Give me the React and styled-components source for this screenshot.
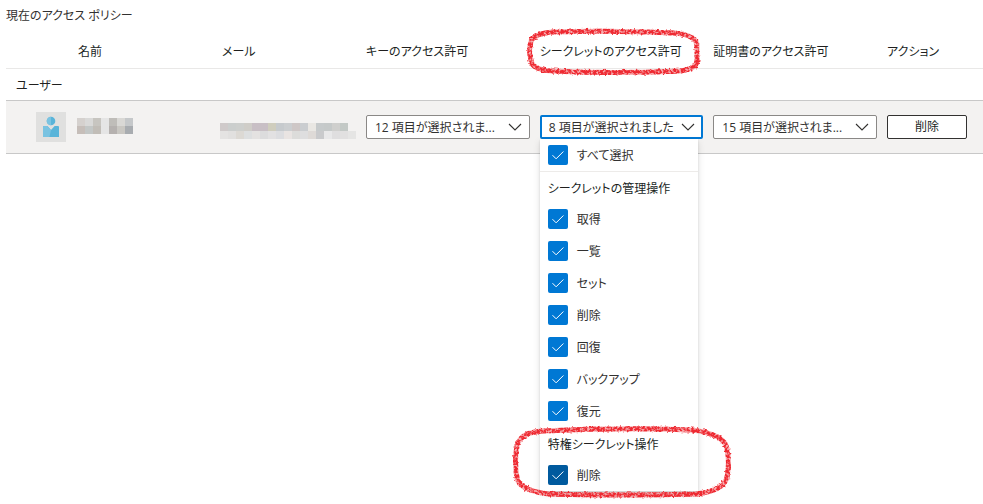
/**
*
* AccessPolicies
*
*/

import React from 'react';
import styled, { createGlobalStyle } from 'styled-components';

const GlobalStyle = createGlobalStyle`
  * {
    box-sizing: border-box;
  }

  body {
    margin: 0;
    background: #fff;
    color: #323130;
    font-family: "Open Sans", "Noto Sans CJK JP", sans-serif;
    font-size: 12px;
    line-height: 18px;
    font-feature-settings: "palt";
  }
`;

const Page = styled.main`
  min-height: 100vh;
  padding: 7px 0 0 6px;
`;

const Title = styled.h1`
  margin: 0 0 9px;
  font-size: 12px;
  font-weight: 400;
`;

const Table = styled.table`
  width: 100%;
  table-layout: fixed;
  border-collapse: separate;
  border-spacing: 0;
`;

const Col = styled.col`
  width: ${props => props.$width || 'auto'};
`;

const HeadCell = styled.th`
  position: relative;
  height: 35px;
  padding: 2px 0 0;
  border-bottom: 1px solid #e9e8e7;
  color: #201f1e;
  font-weight: 400;
  text-align: left;
  white-space: nowrap;
`;

const GroupCell = styled.th`
  height: 32px;
  padding: 2px 10px 0;
  border-bottom: 1px solid #c8c8c8;
  color: #201f1e;
  font-weight: 400;
  text-align: left;
`;

const Cell = styled.td`
  height: 53px;
  padding: 0 10px 0 0;
  border-bottom: 1px solid #c8c8c8;
  background: #f3f2f1;
`;

const Avatar = styled.div`
  display: flex;
  align-items: center;
  justify-content: center;
  width: 30px;
  height: 30px;
  margin-left: 30px;
  background: #e0e0df;
`;

const Mosaic = styled.svg`
  display: block;
  margin: ${props => props.$margin};
`;

const Dropdown = styled.div`
  position: relative;
  display: grid;
  align-items: center;
`;

const Select = styled.select`
  grid-area: 1 / 1;
  width: 100%;
  height: 24px;
  padding: 2px 26px 0 ${props => (props.$open ? '7px' : '8px')};
  border: ${props => (props.$open ? '2px solid #0078d4' : '1px solid #8a8886')};
  border-radius: 2px;
  outline: none;
  background: #fff;
  color: #323130;
  font: inherit;
  font-feature-settings: inherit;
  appearance: none;
`;

const Chevron = styled.svg`
  grid-area: 1 / 1;
  justify-self: end;
  margin-right: 8px;
  pointer-events: none;
`;

const Menu = styled.div`
  position: absolute;
  top: 100%;
  left: 0;
  z-index: 1;
  width: 158px;
  background: #fff;
  box-shadow: 0 3px 7px rgba(0, 0, 0, 0.13), 0 1px 2px rgba(0, 0, 0, 0.11);
`;

const Group = styled.fieldset`
  min-width: 0;
  margin: 0;
  padding: 0;
  border: 0;
`;

const GroupTitle = styled.legend`
  display: flex;
  align-items: center;
  width: 100%;
  height: 32px;
  padding: 2px 8px 0;
  border-top: 1px solid ${props => (props.$divided ? '#edebe9' : 'transparent')};
  color: #201f1e;
  white-space: nowrap;
`;

const Option = styled.label`
  display: flex;
  align-items: center;
  gap: 9px;
  height: 32px;
  padding: 0 8px;
`;

const OptionText = styled.span`
  padding-top: 2px;
`;

const CheckBox = styled.span`
  display: grid;
  width: 20px;
  height: 20px;
`;

const CheckInput = styled.input`
  grid-area: 1 / 1;
  width: 20px;
  height: 20px;
  margin: 0;
  border: 1px solid #605e5c;
  border-radius: 2px;
  appearance: none;

  &:checked {
    border-color: transparent;
    background: ${props => (props.$hovered ? '#005a9e' : '#0078d4')} border-box;
  }
`;

const CheckMark = styled.svg`
  grid-area: 1 / 1;
  place-self: center;
  pointer-events: none;

  input:not(:checked) + & {
    display: none;
  }
`;

const DeleteButton = styled.button`
  display: block;
  width: 80px;
  height: 24px;
  padding: 0;
  border: 1px solid #323130;
  border-radius: 2px;
  background: #fff;
  color: #201f1e;
  font: inherit;
`;

const Marker = styled.svg`
  position: absolute;
  top: ${props => props.$top};
  left: ${props => props.$left};
  z-index: 2;
  pointer-events: none;
`;

const nameTiles = [
  ['#d5d1ce', '#d9d9d8', '#c7c5c0', '#e5e5e5', '#bfbdb9', '#d9d8d5', '#c5c8ca'],
  ['#c6beb9', '#c3c7c6', '#c1bdb7', '#e5e5e5', '#b5b1af', '#c9c7c2', '#a8acb0'],
];

const mailTiles = [
  ['#cfcaca', '#cbcecd', '#cdcfcd', '#cfcdc8', '#c8bfc5', '#c8bfc5', '#cfcdbd', '#c6cacd', '#cbced0', '#cec7c6', '#cacdd0', '#e9e7e3', '#c6cacb', '#c5c9c9', '#cfcfcd', '#c3c9c6'],
  ['#e4e3e2', '#e1e0df', '#dcd9d4', '#dddfe0', '#e4e2e1', '#dcdcdd', '#e2e1e2', '#dcdde0', '#e9e4e2', '#dcdcda', '#dededf', '#dedad7', '#c9cacc', '#e8e8e9', '#dfdedf', '#e1e0e0', '#e5e5e4'],
];

const manageOptions = ['取得', '一覧', 'セット', '削除', '回復', 'バックアップ', '復元'];

const Tiles = ({ rows, label, margin }) => {
  const count = Math.max(...rows.map(row => row.length));
  return (
    <Mosaic $margin={margin} width={count * 8} height={rows.length * 8} shapeRendering="crispEdges" role="img" aria-label={label}>
      {rows.map((row, y) => row.map((fill, x) => (
        <rect key={`${x}-${y}`} x={x * 8} y={y * 8} width="8" height="8" fill={fill} />
      )))}
    </Mosaic>
  );
};

const UserIcon = () => (
  <svg width="18" height="22" viewBox="0 0 18 22" aria-hidden="true">
    <circle cx="9" cy="5" r="4.3" fill="#59b4d9" />
    <path d="M9 .7a4.3 4.3 0 0 0 0 8.6z" fill="#7ac3e1" />
    <path d="M1 11q0-1 1-1h3.4L9 14l3.6-4H16q1 0 1 1v10H1z" fill="#59b4d9" />
    <path d="M1 11q0-1 1-1h3.4L9 14 7.4 21H1z" fill="#7ac3e1" />
  </svg>
);

const Picker = ({ label, value, open, children }) => (
  <Dropdown>
    <Select aria-label={label} $open={open}>
      <option>{value}</option>
    </Select>
    <Chevron width="14" height="8" viewBox="0 0 14 8" aria-hidden="true">
      <path d="M1 1l6 6 6-6" fill="none" stroke="#323130" strokeWidth="1.1" />
    </Chevron>
    {children}
  </Dropdown>
);

const CheckOption = ({ text, hovered }) => (
  <Option>
    <CheckBox>
      <CheckInput type="checkbox" defaultChecked $hovered={hovered} />
      <CheckMark width="14" height="12" viewBox="0 0 14 12" aria-hidden="true">
        <path d="M1.5 6.2l3.6 3.6L12.4 2.5" fill="none" stroke="#fff" strokeWidth="1" />
      </CheckMark>
    </CheckBox>
    <OptionText>{text}</OptionText>
  </Option>
);

// hand drawn red outline, roughened like a crayon
const Crayon = ({ id, top, left, width, height, path }) => (
  <Marker $top={top} $left={left} width={width} height={height} aria-hidden="true">
    <filter id={id} filterUnits="userSpaceOnUse" x="0" y="0" width={width} height={height} colorInterpolationFilters="sRGB">
      <feTurbulence type="fractalNoise" baseFrequency="0.4" numOctaves="2" seed="4" result="noise" />
      <feDisplacementMap in="SourceGraphic" in2="noise" scale="4" xChannelSelector="R" yChannelSelector="G" result="rough" />
      <feColorMatrix in="noise" type="matrix" values="0 0 0 0 0  0 0 0 0 0  0 0 0 0 0  0 0 4 0 -1.2" result="grain" />
      <feComposite in="rough" in2="grain" operator="in" />
    </filter>
    <path d={path} fill="none" stroke="#f25a60" strokeWidth="5" opacity="0.5" />
    <path d={path} fill="none" stroke="#ee2a32" strokeWidth="5" filter={`url(#${id})`} />
  </Marker>
);

class AccessPolicies extends React.PureComponent {
  render() {
    return (
      <Page>
        <GlobalStyle />
        <Title>現在のアクセス ポリシー</Title>
        <Table>
          <colgroup>
            <Col $width="72px" />
            <Col $width="144px" />
            <Col $width="144px" />
            <Col />
            <Col />
            <Col />
            <Col $width="96px" />
          </colgroup>
          <thead>
            <tr>
              <HeadCell as="td" />
              <HeadCell>名前</HeadCell>
              <HeadCell>メール</HeadCell>
              <HeadCell>キーのアクセス許可</HeadCell>
              <HeadCell>
                シークレットのアクセス許可
                <Crayon
                  id="crayon-header"
                  top="-8px"
                  left="-16px"
                  width="180"
                  height="54"
                  path="M28 6Q90 4 150 7Q173 9 173 20V34Q173 43 156 45Q90 48 28 45Q8 44 7 34Q4 24 7 16Q9 8 28 6"
                />
              </HeadCell>
              <HeadCell>証明書のアクセス許可</HeadCell>
              <HeadCell>アクション</HeadCell>
            </tr>
          </thead>
          <tbody>
            <tr>
              <GroupCell colSpan={7}>ユーザー</GroupCell>
            </tr>
            <tr>
              <Cell>
                <Avatar>
                  <UserIcon />
                </Avatar>
              </Cell>
              <Cell>
                <Tiles rows={nameTiles} label="名前" margin="0 0 2px -1px" />
              </Cell>
              <Cell>
                <Tiles rows={mailTiles} label="メール" margin="8px 0 0 -2px" />
              </Cell>
              <Cell>
                <Picker label="キーのアクセス許可" value="12 項目が選択されま..." />
              </Cell>
              <Cell>
                <Picker label="シークレットのアクセス許可" value="8 項目が選択されました" open>
                  <Menu>
                    <CheckOption text="すべて選択" />
                    <Group>
                      <GroupTitle $divided>シークレットの管理操作</GroupTitle>
                      {manageOptions.map(text => <CheckOption key={text} text={text} />)}
                    </Group>
                    <Group>
                      <GroupTitle>特権シークレット操作</GroupTitle>
                      <CheckOption text="削除" hovered />
                    </Group>
                    <Crayon
                      id="crayon-menu"
                      top="284px"
                      left="-30px"
                      width="226"
                      height="80"
                      path="M34 8Q110 4 182 7Q215 11 217 26Q220 40 217 54Q214 68 186 71Q110 73 38 71Q9 67 7 55Q4 38 7 23Q10 9 34 8"
                    />
                  </Menu>
                </Picker>
              </Cell>
              <Cell>
                <Picker label="証明書のアクセス許可" value="15 項目が選択されま..." />
              </Cell>
              <Cell>
                <DeleteButton type="button">削除</DeleteButton>
              </Cell>
            </tr>
          </tbody>
        </Table>
      </Page>
    );
  }
}

export default AccessPolicies;
